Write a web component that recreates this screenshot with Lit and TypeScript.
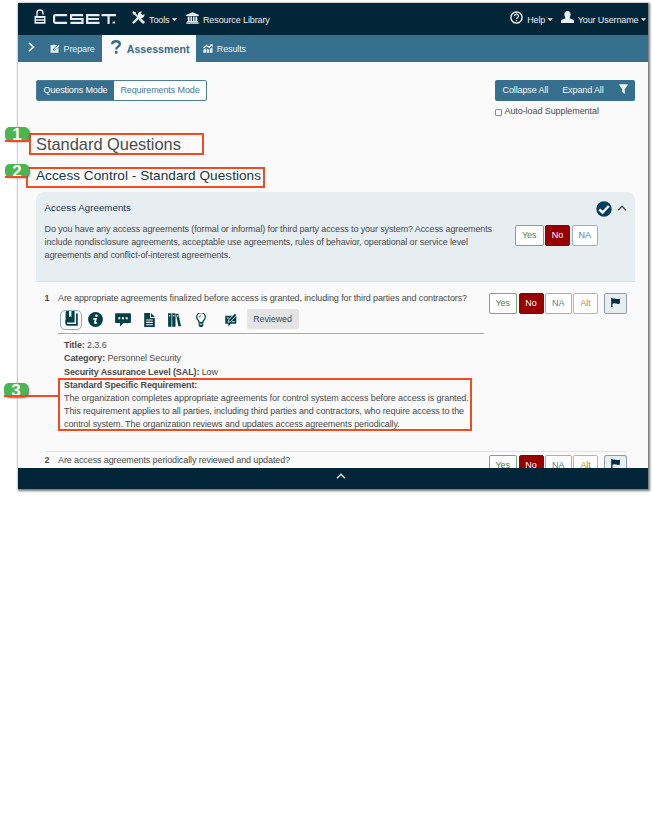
import { LitElement, html, css, svg, nothing } from "lit";
import { customElement, property } from "lit/decorators.js";

const glyphs: Record<string, { box: string; art: unknown }> = {
  lock: {
    box: "0 0 12 15",
    art: svg`<path d="M3 7.500V4a3 3 0 0 1 6 0v1.500" fill="none" stroke="currentColor" stroke-width="1.400"/><path fill-rule="evenodd" d="M.5 7h11v7.700H.5zM2 9.100v1.100h8V9.100zM2 11.800v1.100h8v-1.100z"/>`,
  },
  logo: {
    box: "0 0 66 10",
    art: svg`<g fill="none" stroke="currentColor" stroke-width="2.200"><path d="M14.500 1.200H2.500Q1.100 1.200 1.100 2.500V7.500Q1.100 8.800 2.500 8.800H14.500M31 1.200H18.600V5H30.400V8.800H18M48 1.200H35.200V8.800H48M35 5H47.500M50 1.200H65M57.300 1.200V10"/></g><rect x="61.500" y="7.500" width="2.500" height="2"/>`,
  },
  tools: {
    box: "0 0 14 14",
    art: svg`<path d="M1.800 12.300 8.700 5.400" stroke="currentColor" stroke-width="2.600" stroke-linecap="round"/><path d="M13.300 3.200 11.300 4.600 9.500 2.800 10.800.7A3.600 3.600 0 1 0 13.300 3.200z"/><path d="m2 2 6.500 6.500" stroke="currentColor" stroke-width="1.700"/><path d="M.3 1.600 1.700.2 4.300 1.700 4 3.300 3.300 4 1.800 4z"/><path d="m8.800 8.800 3.300 3.300" stroke="currentColor" stroke-width="3" stroke-linecap="round"/>`,
  },
  bank: {
    box: "0 0 14 14",
    art: svg`<path d="M7 .3 13.700 3.200V4.700H.3V3.200zM1.900 5.200h2v5.600h-2zM4.800 5.200h1.700v5.600H4.800zM7.500 5.200h1.700v5.600H7.500zM10.100 5.200h2v5.600h-2zM1.200 10.600h11.600v1.300H1.200zM.2 12.200h13.600v1.500H.2z"/>`,
  },
  help: {
    box: "0 0 14 14",
    art: svg`<circle cx="7" cy="7" r="6" fill="none" stroke="currentColor" stroke-width="1.500"/><path d="M4.900 5.600A2.100 2.100 0 1 1 8 7.300Q7 7.800 7 8.700" fill="none" stroke="currentColor" stroke-width="1.400"/><rect x="6.200" y="9.600" width="1.500" height="1.500"/>`,
  },
  user: {
    box: "0 0 13 12",
    art: svg`<ellipse cx="6.500" cy="3.500" rx="3.100" ry="3.500"/><path d="M0 12V10.300Q.2 8.500 4 7.600L4.500 6H8.500L9 7.600Q12.800 8.500 13 10.300V12z"/>`,
  },
  next: { box: "0 0 7 10", art: svg`<path d="m1 .8 4.600 4.200L1 9.200" fill="none" stroke="currentColor" stroke-width="1.700"/>` },
  up: { box: "0 0 10 6", art: svg`<path d="M1 5.200 5 1.300 9 5.200" fill="none" stroke="currentColor" stroke-width="1.400"/>` },
  prepare: {
    box: "0 0 10 10",
    art: svg`<path d="M.6 1.200H2.800Q4 -.3 5.200 1.200H7.300L3.200 5.400V7.200H5L8.500 3.800V9.700H.6z"/><path d="M3.900 6.500 4.200 5.200 8.400.9 9.600 2.100 5.300 6.300z"/>`,
  },
  question: {
    box: "0 0 10 14",
    art: svg`<path d="M1.200 4.300Q1.200 1.200 5 1.200 8.800 1.200 8.800 4 8.800 5.600 7 6.700 5.200 7.700 5.200 9.600" fill="none" stroke="currentColor" stroke-width="2.400"/><rect x="3.900" y="11" width="2.600" height="2.700"/>`,
  },
  results: {
    box: "0 0 11 10",
    art: svg`<path d="M.3 6.400 3.200 4.800V9.800H.3zM4 5l2.800 1.300V9.800H4zM7.500 5.500 10.500 3.500V9.800h-3z"/><path d="m.4 4.500 3.400-2.700 3 1.600L9.300 1.400" fill="none" stroke="currentColor" stroke-width="1.600"/><path d="M7.500.2h3.200v3.200z"/>`,
  },
  filter: { box: "0 0 10 10", art: svg`<path d="M.2.200H9.800Q9.800 1.500 6.400 5V10L3.600 8V5Q.2 1.500.2.200z"/>` },
  check: {
    box: "0 0 16 16",
    art: svg`<circle cx="8" cy="8" r="7.700"/><path d="m3.400 8.500 3.200 3L12.800 5" fill="none" stroke="#fff" stroke-width="2.400"/>`,
  },
  flag: { box: "0 0 9 9", art: svg`<path d="M.2.100H1.500V.8Q3 .2 4.600.8T8.900.7V5.600Q7 6.200 5.200 5.600T1.500 5.700V9H.2z"/>` },
  book: {
    box: "0 0 13 15",
    art: svg`<path d="M2 0H4V6.300L5.200 5.300 6.400 6.300V0H9.600V11.500H2Q.6 11.500.6 10V1.400Q.6 0 2 0z"/><path d="M1.200 9V12Q1.200 13.900 3 13.900H11.900V2.500" fill="none" stroke="currentColor" stroke-width="1.700"/>`,
  },
  info: {
    box: "0 0 15 15",
    art: svg`<circle cx="7.500" cy="7.500" r="7.400"/><circle cx="8.500" cy="3.700" r="1.300" fill="#fafafa"/><path d="M5.300 6.800H8L6.800 10.500Q6.700 11.600 9 10.700" fill="none" stroke="#fafafa" stroke-width="1.700"/>`,
  },
  chat: {
    box: "0 0 16 14",
    art: svg`<path d="M1 .3H15Q15.900.3 15.900 1.200V9Q15.900 9.900 15 9.900H8.500L5 13.500V9.900H1Q.1 9.900.1 9V1.200Q.1.300 1 .3z"/><path d="M3.300 4.200h2v2h-2zM7 4.200h2v2H7zM10.700 4.200h2v2h-2z" fill="#fafafa"/>`,
  },
  file: {
    box: "0 0 11 14",
    art: svg`<path fill-rule="evenodd" d="M.2.100H6V5H10.800V13.900H.2zM2.200 6.400v1.100h6.600V6.400zM2.200 8.800v1.100h6.600V8.800zM2.200 11.200v1.100h6.600v-1.100z"/><path d="M7 .1 10.800 4H7z"/>`,
  },
  library: {
    box: "0 0 13 14",
    art: svg`<path fill-rule="evenodd" d="M.1.200H3.500V13.800H.1zM1.200 2v1.500h1.200V2zM4.200.200H7.500V13.800H4.200zM5.300 2v1.500h1.100V2zM7.900 1 10.200.5 13 13 10.500 13.600zM9 2.500l.3 1.400 1-.2L10 2.300z"/>`,
  },
  bulb: {
    box: "0 0 10 14",
    art: svg`<path d="M3.100 9.500Q3.100 8 2 7A4.300 4.300 0 1 1 8 7Q6.900 8 6.900 9.500z" fill="none" stroke="currentColor" stroke-width="1.200"/><path d="M3.200 4.600Q3.200 3 5 2.700" stroke="currentColor" stroke-width=".8" fill="none"/><path fill-rule="evenodd" d="M2.600 10.200h4.800v2L6.300 13.900H3.700L2.600 12.200zM3.800 11.200v.7h2.400v-.7z"/>`,
  },
  feedback: {
    box: "0 0 13 14",
    art: svg`<path d="M.3 2.700H12.200V10.800H6.500L3.600 13.600V10.800H.3z"/><path d="M3.300 9.300 4.100 6.700 10.700.4 12.800 2 6.200 8.500z" stroke="#fafafa" stroke-width=".8"/><path d="M1.800 5H4.500M7.500 8.700H10.500" stroke="#fafafa" stroke-width=".9"/>`,
  },
};

@customElement("cs-icon")
class CsIcon extends LitElement {
  @property() name = "";
  static styles = css`
    :host { display: block; flex: none; }
    svg { display: block; width: 100%; height: 100%; fill: currentColor; }
  `;
  render() {
    const g = glyphs[this.name];
    return html`<svg viewBox=${g.box} preserveAspectRatio="none" aria-hidden="true">${g.art}</svg>`;
  }
}

@customElement("cs-answers")
class CsAnswers extends LitElement {
  @property({ type: Boolean }) full = false;
  static styles = css`
    :host { display: flex; gap: 1.5px; font: 9px/19px "Liberation Sans", Arial, sans-serif; letter-spacing: -0.1px; }
    .b { box-sizing: border-box; height: 21px; border: 1px solid; border-radius: 2px; background: #fff; text-align: center; }
    .yes { width: 28.500px; color: #3f8345; border-color: #73ad78; }
    .no { width: 25px; color: #fff; background: #960000; border-color: #960000; }
    .na { width: 26.500px; color: #55809c; border-color: #94b4c9; }
    .alt { width: 25px; color: #b88b38; border-color: #d7b26d; }
    .flag { width: 23.500px; margin-left: 4px; background: #e7eef2; border-color: #8e9da5; color: #022a42; display: flex; justify-content: center; padding-top: 3.500px; }
    cs-icon { width: 9px; height: 9px; }
  `;
  render() {
    return html`<div class="b yes">Yes</div><div class="b no">No</div><div class="b na">NA</div>
      ${this.full ? html`<div class="b alt">Alt</div><div class="b flag"><cs-icon name="flag"></cs-icon></div>` : nothing}`;
  }
}

@customElement("app-root")
class AppRoot extends LitElement {
  static styles = css`
    :host { display: block; position: relative; width: 653px; height: 818px; overflow: hidden; background: #fff; color: #4b4b4b; font: 9px/13.2px "Liberation Sans", Arial, sans-serif; letter-spacing: -0.11px; }
    * { box-sizing: border-box; }
    .window { display: flex; flex-direction: column; width: 630px; height: 486px; margin: 2.500px 0 0 18px; background: #fafafa; box-shadow: 1px 1px 2px 1px #777; white-space: nowrap; }
    .top { height: 32.500px; flex: none; display: flex; align-items: center; background: #022637; color: #e8eef1; padding: 0 2px 0 16px; }
    .top span { padding-top: 3px; }
    .lock { width: 12px; height: 15px; margin-top: -4px; }
    .logo { width: 64px; height: 10px; margin: 1px 15px 0 7px; }
    .tools { width: 13px; height: 13px; margin: -2px 4px 0 0; }
    .bank { width: 13px; height: 12px; margin: -2px 4px 0 9px; }
    .help { width: 13px; height: 13px; margin: -3px 4px 0 auto; }
    .user { width: 13px; height: 12px; margin: -3px 4px 0 8px; }
    .caret { width: 5px; height: 3px; margin: 2px 0 0 2.500px; background: currentColor; clip-path: polygon(0 0, 100% 0, 50% 100%); }
    .nav { height: 27px; flex: none; display: flex; background: #37708f; color: #e8f0f4; align-items: center; padding-left: 9.500px; }
    .next { width: 7px; height: 10px; margin: -3px 15px 0 0; }
    .nav .prep { width: 10px; height: 9px; margin-right: 4px; }
    .nav .txt { padding-top: 2px; }
    .tab { width: 94px; height: 27px; margin-left: 7px; background: #fafafa; color: #346c8b; display: flex; align-items: center; padding-left: 9px; font-weight: bold; font-size: 10.600px; letter-spacing: .03px; }
    .quest { width: 10px; height: 14px; margin: -3px 6px 0 0; }
    .res { width: 10px; height: 9px; margin: 0 4px 0 7px; }
    .content { height: 405.500px; flex: none; overflow: hidden; padding: 18px 13px 0 18px; }
    .bar { display: flex; justify-content: space-between; height: 21px; }
    .modes { display: flex; width: 171px; border: 1px solid #4b7e99; border-radius: 2px; background: #fff; color: #447995; line-height: 19px; }
    .modes div { flex: 1; text-align: center; }
    .modes .on { flex: 0 0 77px; background: #37708f; color: #fff; }
    .actions { width: 140px; display: flex; background: #37708f; border-radius: 2px; color: #f3f7f9; line-height: 21px; padding-left: 7.500px; gap: 14px; }
    .filter { width: 9px; height: 10px; margin: 4px 0 0 1px; }
    .auto { display: flex; align-items: center; width: 140px; margin: 4px 0 0 auto; height: 14px; gap: 2.500px; letter-spacing: -.08px; }
    .box { width: 7px; height: 7px; border: 1px solid #8b8b8b; border-radius: 1px; background: #fff; }
    h1 { margin: 15px 0 0; font: 16.400px/21px "Liberation Sans", Arial, sans-serif; letter-spacing: 0; }
    h2 { margin: 12px 0 0; font: 13.600px/17px "Liberation Sans", Arial, sans-serif; color: #173549; letter-spacing: .04px; }
    .card { margin-top: 7.500px; height: 90px; background: #e7eef2; border-radius: 8px 8px 0 0; border-bottom: 1px solid #d9e2e8; padding: 8px 8px 0 8.500px; }
    .head { display: flex; align-items: center; height: 15px; }
    .head h3 { font: 9.700px/15px "Liberation Sans", Arial, sans-serif; letter-spacing: .05px; color: #173549; margin: 0; flex: 1; }
    .check { width: 16px; height: 16px; margin: 3px 5px 0 0; color: #063d5d; }
    .up { width: 10px; height: 6px; margin-top: 1px; }
    .intro { display: flex; justify-content: space-between; padding: 8.500px 29px 0 0; }
    .intro cs-answers { margin-top: 1.500px; }
    .q { margin: 0 8.500px; display: flex; }
    .num { width: 13.500px; font-weight: bold; }
    .main { width: 426px; }
    .one { height: 169px; padding-top: 10.500px; }
    .two { border-top: 1px solid #dfe3e5; padding-top: 2px; }
    .two cs-answers { margin-top: 1px; }
    .q cs-answers { margin-left: auto; flex: none; height: 21px; margin-right: -.5px; }
    .one cs-answers { margin-top: 1px; }
    .icons { display: flex; align-items: center; height: 28.500px; border-bottom: 1px solid #8db3c7; color: #034046; }
    .sel { width: 22px; height: 20px; border: 1px solid #8db0c4; border-radius: 5px; padding: 0 4px; margin: 3px 6px 0 1.500px; }
    .sel cs-icon { width: 13px; height: 15px; }
    .reviewed { height: 20px; width: 52px; line-height: 20px; text-align: center; background: #e4e4e4; border-radius: 2px; color: #445661; margin: 1px 0 0 10px; }
    .details { padding: 5.500px 0 0 6px; }
    .footer { flex: 1; background: #022637; color: #e4ecef; display: flex; justify-content: center; padding: 5.500px 0 0 16px; }
    .footer cs-icon { width: 10px; height: 6px; }
    .outline, .badge, .wire { position: absolute; }
    .outline { border: 2px solid #f34b1f; }
    .o1 { left: 29px; top: 133px; width: 175px; height: 22px; }
    .o2 { left: 25.500px; top: 167px; width: 239.500px; height: 21px; }
    .o3 { left: 58px; top: 377.500px; width: 414px; height: 53px; }
    .badge { width: 24px; height: 13.500px; border-radius: 5px; background: #49b653; color: #fff; font: bold 17px/15px "Liberation Sans", Arial, sans-serif; text-align: center; box-shadow: 1px 1px 2px #666; }
    .b1 { left: 5px; top: 127px; } .b2 { left: 5px; top: 163.500px; } .b3 { left: 4px; top: 383px; }
    .wire { height: 1.500px; background: #f34b1f; }
    .w1 { left: 5px; top: 140px; width: 25px; } .w2 { left: 5px; top: 176px; width: 21px; } .w3 { left: 4px; top: 395px; width: 55px; }
    .i-info { width: 15px; height: 15px; margin-right: 12px; }
    .i-chat { width: 16px; height: 14px; margin-right: 13px; }
    .i-file { width: 11px; height: 14px; margin-right: 13px; }
    .i-library { width: 13px; height: 14px; margin-right: 15px; }
    .i-bulb { width: 10px; height: 14px; margin-right: 19px; }
    .i-feedback { width: 12px; height: 14px; }
    .icons > cs-icon { margin-top: 2px; }
  `;
  render() {
    return html`
      <div class="window">
        <header class="top">
          <cs-icon class="lock" name="lock"></cs-icon><cs-icon class="logo" name="logo"></cs-icon>
          <cs-icon class="tools" name="tools"></cs-icon><span>Tools</span><i class="caret"></i>
          <cs-icon class="bank" name="bank"></cs-icon><span>Resource Library</span>
          <cs-icon class="help" name="help"></cs-icon><span>Help</span><i class="caret"></i>
          <cs-icon class="user" name="user"></cs-icon><span>Your Username</span><i class="caret"></i>
        </header>
        <nav class="nav">
          <cs-icon class="next" name="next"></cs-icon>
          <cs-icon class="prep" name="prepare"></cs-icon><span class="txt">Prepare</span>
          <div class="tab"><cs-icon class="quest" name="question"></cs-icon><span class="txt">Assessment</span></div>
          <cs-icon class="res" name="results"></cs-icon><span class="txt">Results</span>
        </nav>
        <main class="content">
          <div class="bar">
            <div class="modes"><div class="on">Questions Mode</div><div>Requirements Mode</div></div>
            <div class="actions"><span>Collapse All</span><span>Expand All</span><cs-icon class="filter" name="filter"></cs-icon></div>
          </div>
          <div class="auto"><i class="box"></i><span>Auto-load Supplemental</span></div>
          <h1>Standard Questions</h1>
          <h2>Access Control - Standard Questions</h2>
          <section class="card">
            <div class="head"><h3>Access Agreements</h3><cs-icon class="check" name="check"></cs-icon><cs-icon class="up" name="up"></cs-icon></div>
            <div class="intro">
              <div>Do you have any access agreements (formal or informal) for third party access to your system? Access agreements<br />include nondisclosure agreements, acceptable use agreements, rules of behavior, operational or service level<br />agreements and conflict-of-interest agreements.</div>
              <cs-answers></cs-answers>
            </div>
          </section>
          <section class="q one">
            <div class="num">1</div>
            <div class="main">
              <div>Are appropriate agreements finalized before access is granted, including for third parties and contractors?</div>
              <div class="icons">
                <div class="sel"><cs-icon name="book"></cs-icon></div>
                ${["info", "chat", "file", "library", "bulb", "feedback"].map((n) => html`<cs-icon class="i-${n}" name=${n}></cs-icon>`)}
                <div class="reviewed">Reviewed</div>
              </div>
              <div class="details">
                <b>Title:</b> 2.3.6<br /><b>Category:</b> Personnel Security<br /><b>Security Assurance Level (SAL):</b> Low<br /><b>Standard Specific Requirement:</b><br />
                The organization completes appropriate agreements for control system access before access is granted.<br />This requirement applies to all parties, including third parties and contractors, who require access to the<br />control system. The organization reviews and updates access agreements periodically.
              </div>
            </div>
            <cs-answers full></cs-answers>
          </section>
          <section class="q two">
            <div class="num">2</div>
            <div class="main">Are access agreements periodically reviewed and updated?</div>
            <cs-answers full></cs-answers>
          </section>
        </main>
        <footer class="footer"><cs-icon name="up"></cs-icon></footer>
      </div>
      <div class="outline o1"></div><div class="outline o2"></div><div class="outline o3"></div>
      <div class="badge b1">1</div><div class="badge b2">2</div><div class="badge b3">3</div>
      <div class="wire w1"></div><div class="wire w2"></div><div class="wire w3"></div>
    `;
  }
}
